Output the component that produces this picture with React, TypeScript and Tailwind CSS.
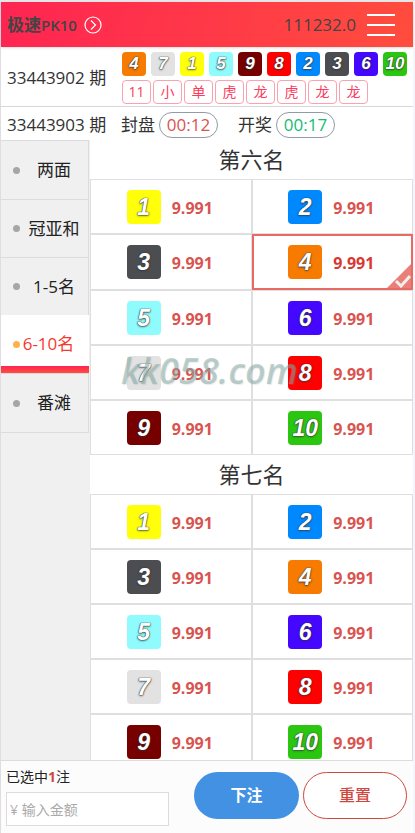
import { useState } from 'react';

const ballColors: Record<number, string> = {
  1: 'bg-[#ffff0a]',
  2: 'bg-[#0089ff]',
  3: 'bg-[#4c4d51]',
  4: 'bg-[#f77b00]',
  5: 'bg-[#8ffbfd]',
  6: 'bg-[#4407ff]',
  7: 'bg-[#e2e2e2]',
  8: 'bg-[#ff0000]',
  9: 'bg-[#760000]',
  10: 'bg-[#2bc610]',
};

const lastDraw = [4, 7, 1, 5, 9, 8, 2, 3, 6, 10];
const lastTags = ['11', '小', '单', '虎', '龙', '虎', '龙', '龙'];
const tabs = ['两面', '冠亚和', '1-5名', '6-10名', '番滩'];
const groups = ['第六名', '第七名'];
const numbers = [1, 2, 3, 4, 5, 6, 7, 8, 9, 10];

function Ball({ value, small }: { value: number; small?: boolean }) {
  const size = small ? 'w-6 h-6 text-[17px] leading-6' : 'w-[34px] h-[34px] text-[23px] leading-[34px]';
  return (
    <span
      className={`block shrink-0 rounded text-center font-['Liberation_Sans',sans-serif] font-bold italic text-white [text-shadow:0_0_1px_#333,0_0_1px_#333,0_1px_2px_#333a] ${size} ${ballColors[value]}`}
    >
      {value}
    </span>
  );
}

function Timer({ label, time, color }: { label: string; time: string; color: string }) {
  return (
    <div className="flex items-center gap-1">
      <span>{label}</span>
      <span className={`flex h-[26px] w-[59px] items-center justify-center rounded-full border border-[#939ba3] ${color}`}>
        {time}
      </span>
    </div>
  );
}

export default function App() {
  const [activeTab, setActiveTab] = useState('6-10名');
  const [selected, setSelected] = useState<string[]>(['第六名-4']);
  const [amount, setAmount] = useState('');

  const toggle = (key: string) => {
    setSelected((prev) => (prev.includes(key) ? prev.filter((k) => k !== key) : [...prev, key]));
  };

  const reset = () => {
    setSelected([]);
    setAmount('');
  };

  return (
    <div className="relative flex h-screen flex-col border-t-2 border-r-2 border-l border-t-[#e7e7ea] border-r-[#f5f5fc] border-l-[#dddde3] bg-white font-['Open_Sans','Noto_Sans_CJK_SC',sans-serif] text-[17px] text-[#333]">
      {/* Header */}
      <header className="flex h-[45px] shrink-0 items-center justify-between bg-linear-[100deg] from-[#ff2452] to-[#ff4d3d] pr-[18px] pl-1.5 shadow-sm">
        <button type="button" className="flex items-center gap-[7px] text-[#444]">
          <span className="font-bold">
            极速<span className="text-[15px] font-semibold">PK10</span>
          </span>
          <svg className="h-[18px] w-[18px]" viewBox="0 0 18 18" fill="none" stroke="white" strokeWidth="1.2">
            <circle cx="9" cy="9" r="8" />
            <path d="M7 4.5 11.5 9 7 13.5" />
          </svg>
        </button>
        <div className="flex items-center gap-[11px]">
          <span className="text-[#444]">111232.0</span>
          <button type="button" aria-label="菜单" className="flex w-7 flex-col gap-2">
            <span className="h-0.5 bg-white" />
            <span className="h-0.5 bg-white" />
            <span className="h-0.5 bg-white" />
          </button>
        </div>
      </header>

      {/* Last draw */}
      <section className="flex h-[60px] shrink-0 items-center border-b border-[#d8d8dc] pt-0.5 pl-1.5">
        <p className="w-[115px] shrink-0">33443902 期</p>
        <div>
          <div className="flex gap-[5px]">
            {lastDraw.map((n) => (
              <Ball key={n} value={n} small />
            ))}
          </div>
          <div className="mt-1 flex gap-0.5">
            {lastTags.map((tag, i) => (
              <span
                key={i}
                className="flex h-6 w-[29px] items-center justify-center rounded border border-[#f9a3b0] text-[14px] text-[#fb3c5c]"
              >
                {tag}
              </span>
            ))}
          </div>
        </div>
      </section>

      {/* Current draw */}
      <section className="flex h-[33px] shrink-0 items-center pt-0.5 pl-1.5">
        <p className="w-[114px] shrink-0">33443903 期</p>
        <div className="flex gap-5">
          <Timer label="封盘" time="00:12" color="text-[#d9534f]" />
          <Timer label="开奖" time="00:17" color="text-[#12bd70]" />
        </div>
      </section>

      <div className="flex min-h-0 flex-1">
        {/* Play types */}
        <nav className="w-[89px] shrink-0 bg-[#f0f0f0]">
          {tabs.map((tab) => {
            const active = tab === activeTab;
            return (
              <button
                key={tab}
                type="button"
                onClick={() => setActiveTab(tab)}
                className={`flex h-[58px] w-[88px] items-center pl-3 first:h-[59px] last:h-[60px] last:border-b ${
                  active
                    ? 'bg-white bg-[linear-gradient(#ff2452,#ff4d3d)] bg-[length:100%_7px] bg-bottom bg-no-repeat pr-3 text-[#f5392d]'
                    : 'border-t border-r border-[#dcdcdf] text-[#222]'
                }`}
              >
                <span className={`h-[7px] w-[7px] shrink-0 rounded-full ${active ? 'bg-[#ffb04a]' : 'bg-[#a3a7aa]'}`} />
                <span className="flex-1 text-center whitespace-nowrap">{tab}</span>
              </button>
            );
          })}
        </nav>

        {/* Odds */}
        <main className="min-w-0 flex-1 overflow-y-auto [scrollbar-width:none]">
          {groups.map((group) => (
            <section key={group}>
              <h2 className="h-[39px] text-center text-[22px] leading-[38px]">{group}</h2>
              <div className="grid grid-cols-2">
                {numbers.map((n) => {
                  const key = `${group}-${n}`;
                  const on = selected.includes(key);
                  return (
                    <button
                      key={n}
                      type="button"
                      aria-pressed={on}
                      onClick={() => toggle(key)}
                      className={`relative flex items-center justify-center gap-[11px] pr-0.5 ${
                        on ? 'h-14 border-2 border-[#e86a64]' : 'min-h-[55px] border border-[#dfdfdf]'
                      }`}
                    >
                      <Ball value={n} />
                      <span className={`pt-0.5 text-[16px] font-bold ${on ? 'text-[#d9372f]' : 'text-[#d9534f]'}`}>9.991</span>
                      {on && (
                        <svg className="absolute right-0 bottom-0 h-6 w-6" viewBox="0 0 24 24" fill="none">
                          <path d="M24 0v24H0z" fill="#e97f76" />
                          <path d="m9 17 5 5 9-10" stroke="#eee" strokeWidth="3" />
                        </svg>
                      )}
                    </button>
                  );
                })}
              </div>
            </section>
          ))}
        </main>
      </div>

      {/* Bet bar */}
      <footer className="flex h-[73px] shrink-0 items-center justify-between border-t border-[#dcdcdc] bg-[#fcfcfc] pr-1.5 pb-1 pl-[5px]">
        <div className="w-[163px]">
          <label htmlFor="amount" className="block text-[14px] leading-[26px] text-[#222]">
            已选中<b className="text-[#d0473f]">{selected.length}</b>注
          </label>
          <input
            id="amount"
            type="text"
            inputMode="numeric"
            value={amount}
            onChange={(e) => setAmount(e.target.value)}
            placeholder="¥ 输入金额"
            className="mt-0.5 block h-[34px] w-full border border-[#dcdcdc] bg-white px-[3px] text-[14px] outline-none placeholder:text-[#aaa]"
          />
        </div>
        <div className="flex gap-1">
          <button type="button" className="h-[47px] w-[105px] rounded-full bg-[#4291e3] text-[16px] font-bold text-white">
            下注
          </button>
          <button
            type="button"
            onClick={reset}
            className="h-[47px] w-[104px] rounded-full border border-[#d0473f] bg-white text-[16px] font-medium text-[#d0473f]"
          >
            重置
          </button>
        </div>
      </footer>

      {/* Site watermark */}
      <div className="pointer-events-none absolute top-[346px] left-[120px] text-[36px] leading-[46px] font-semibold text-[#7fa8a2]/50 italic [text-shadow:1px_1px_1px_#9993]">
        kk058.com
      </div>
    </div>
  );
}
